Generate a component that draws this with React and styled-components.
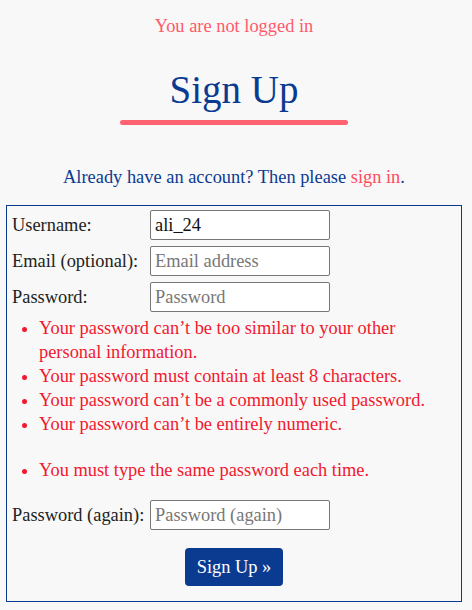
import styled, { createGlobalStyle } from 'styled-components'

const GlobalStyle = createGlobalStyle`
  body {
    margin: 0;
    background: #f8f8f8;
    font-family: "Liberation Serif", serif;
    color: #222;
  }
`;

const Page = styled.div`
  width: 100%;
  padding: 0 10px 0 6px;
  box-sizing: border-box;
  display: flex;
  flex-direction: column;
  align-items: center;
`;

const Status = styled.p`
  margin: 14px 0 0;
  font-size: 18.4px;
  line-height: 24px;
  color: #ff5a6a;
`;

const Title = styled.h1`
  margin: 28px 0 0;
  font-size: 39px;
  line-height: 48px;
  font-weight: normal;
  color: #0b3b91;
`;

const Bar = styled.div`
  width: 228px;
  height: 5px;
  margin-top: 6px;
  border-radius: 3px;
  background: #ff6270;
`;

const Lead = styled.p`
  margin: 40px 0 0;
  font-size: 18.4px;
  line-height: 24px;
  color: #0b3b91;
  a {
    color: #ff4a5c;
    text-decoration: none;
  }
`;

const Form = styled.form`
  align-self: stretch;
  margin-top: 16px;
  border: 1px solid #0b3b91;
  padding: 4px 5px 15px;
  display: flex;
  flex-direction: column;
`;

const Row = styled.div`
  display: grid;
  grid-template-columns: 138px 180px;
  align-items: center;
  margin-top: ${p => p.$gap || 0}px;
`;

const Label = styled.label`
  font-size: 18.4px;
  color: #222;
  white-space: nowrap;
`;

const Input = styled.input`
  box-sizing: border-box;
  width: 180px;
  height: 30px;
  border: 1px solid #767676;
  border-radius: 2px;
  background: #fff;
  padding: 0 4px;
  font-family: "Liberation Serif", serif;
  font-size: 18.4px;
  color: #111;
  &::placeholder {
    color: #777;
  }
`;

const Errors = styled.ul`
  margin: ${p => p.$top}px 0 0;
  padding-left: 27px;
  font-size: 18.4px;
  line-height: 24px;
  color: #f2182e;
`;

const Submit = styled.button`
  align-self: center;
  margin-top: 18px;
  width: 98px;
  height: 38px;
  border: 0;
  border-radius: 4px;
  background: #0b3b91;
  color: #fff;
  font-family: "Liberation Serif", serif;
  font-size: 18.4px;
`;

const App = () => {
  return (
    <>
      <GlobalStyle />
      <Page>
        <Status>You are not logged in</Status>
        <Title>Sign Up</Title>
        <Bar />
        <Lead>Already have an account? Then please <a href="#">sign in</a>.</Lead>
        <Form onSubmit={e => e.preventDefault()}>
          <Row>
            <Label>Username:</Label>
            <Input defaultValue="ali_24" />
          </Row>
          <Row $gap={6}>
            <Label>Email (optional):</Label>
            <Input placeholder="Email address" />
          </Row>
          <Row $gap={6}>
            <Label>Password:</Label>
            <Input type="password" placeholder="Password" />
          </Row>
          <Errors $top={4}>
            <li>Your password can’t be too similar to your other personal information.</li>
            <li>Your password must contain at least 8 characters.</li>
            <li>Your password can’t be a commonly used password.</li>
            <li>Your password can’t be entirely numeric.</li>
          </Errors>
          <Errors $top={22}>
            <li>You must type the same password each time.</li>
          </Errors>
          <Row $gap={18}>
            <Label>Password (again):</Label>
            <Input type="password" placeholder="Password (again)" />
          </Row>
          <Submit type="submit">Sign Up »</Submit>
        </Form>
      </Page>
    </>
  )
}

export default App
